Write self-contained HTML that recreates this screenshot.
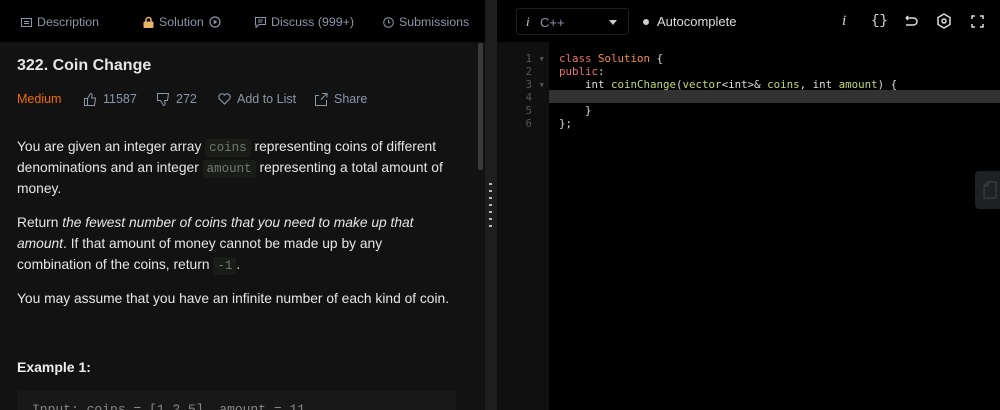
<!DOCTYPE html>
<html><head><meta charset="utf-8"><style>
*{margin:0;padding:0;box-sizing:border-box}
body{width:1000px;height:410px;overflow:hidden;background:#000;font-family:"Liberation Sans",sans-serif;position:relative}
.abs{position:absolute}
#left{left:0;top:0;width:485px;height:410px;background:#121212}
#tabs{left:0;top:0;width:485px;height:42px;background:#000;color:#8a97a6;font-size:12.4px}
.tab{position:absolute;top:15px;white-space:nowrap;display:flex;align-items:center;gap:5px}
.c{color:#e6e6e6;font-size:13.8px;line-height:21px}
code{font-family:"Liberation Mono",monospace;background:#1a1d17;color:#6d7d6f;padding:2px 4px;font-size:12.5px;line-height:1;border-radius:3px}
#div{left:485px;top:0;width:12px;height:410px;background:#1e1e1e}
.code{font-family:"DejaVu Sans Mono","Liberation Mono",monospace;font-size:10.8px;line-height:13px;white-space:pre}
</style></head><body>
<div id="left" class="abs"></div>
<div id="tabs" class="abs">
 <div class="tab" style="left:21px"><svg width="11" height="9" viewBox="0 0 11 9"><rect x=".5" y=".5" width="10" height="8" fill="none" stroke="#8a97a6"/><path d="M3 3.5h5M3 5.5h5" stroke="#8a97a6"/></svg>Description</div>
 <div class="tab" style="left:143px"><svg width="11" height="12" viewBox="0 0 11 12"><path d="M3 6V4a2.5 2.5 0 0 1 5 0v2" fill="none" stroke="#e6b56a" stroke-width="1.5"/><rect x="0.5" y="5.5" width="10" height="6.5" rx="1" fill="#e6b56a"/></svg>Solution<svg width="12" height="12" viewBox="0 0 12 12"><circle cx="6" cy="6" r="5" fill="none" stroke="#8a97a6" stroke-width="1.2"/><path d="M4.7 3.6v4.8l3.6-2.4z" fill="#8a97a6"/></svg></div>
 <div class="tab" style="left:255px"><svg width="11" height="11" viewBox="0 0 11 11"><path d="M.5.5h10v7H4l-3 3v-3H.5z" fill="none" stroke="#8a97a6"/><path d="M3 3h5M3 5h4" stroke="#8a97a6"/></svg>Discuss (999+)</div>
 <div class="tab" style="left:383px"><svg width="11" height="11" viewBox="0 0 11 11"><circle cx="5.5" cy="5.5" r="4.8" fill="none" stroke="#8a97a6"/><path d="M5.5 2.8v3h2" fill="none" stroke="#8a97a6"/></svg>Submissions</div>
</div>
<div class="abs" style="left:478px;top:43px;width:5px;height:127px;background:#3a3a3a;border-radius:2px"></div>
<div class="abs" style="left:17px;top:57px;color:#e6e6e6;font-size:16px;font-weight:bold">322. Coin Change</div>
<div class="abs" style="left:17px;top:92px;font-size:12.5px;color:#8a97a6;white-space:nowrap;width:470px">
 <span style="color:#ef6c00;position:absolute;left:0">Medium</span>
 <span style="position:absolute;left:67px;display:flex;gap:6px;align-items:center"><svg width="13" height="13" viewBox="0 0 13 13"><path d="M.5 5.5h3v7h-3zM3.5 5.5l3-5c1.5 0 1.8 1 1.5 2.5L7.5 5h4l-1 7.5h-7" fill="none" stroke="#8a97a6"/></svg>11587</span>
 <span style="position:absolute;left:140px;display:flex;gap:6px;align-items:center"><svg width="13" height="13" viewBox="0 0 13 13"><path d="M.5.5h11l-1 7h-3l.5 2.5c.3 1.5 0 2.5-1.5 2.5l-3-5h-3z" fill="none" stroke="#8a97a6"/></svg>272</span>
 <span style="position:absolute;left:201px;display:flex;gap:6px;align-items:center"><svg width="13" height="12" viewBox="0 0 13 12"><path d="M6.5 11L1.5 6A3 3 0 0 1 6.5 2a3 3 0 0 1 5 4z" fill="none" stroke="#8a97a6" stroke-width="1.2"/></svg>Add to List</span>
 <span style="position:absolute;left:298px;display:flex;gap:6px;align-items:center"><svg width="13" height="13" viewBox="0 0 13 13"><path d="M4 2.5H.5v10h11V7M7 .5h5v4M12 .5L6 6.5" fill="none" stroke="#8a97a6"/></svg>Share</span>
</div>
<div class="abs c" style="left:17px;top:136px;width:450px">You are given an integer array <code>coins</code> representing coins of different denominations and an integer <code>amount</code> representing a total amount of money.</div>
<div class="abs c" style="left:17px;top:212px;width:410px">Return <i>the fewest number of coins that you need to make up that amount</i>. If that amount of money cannot be made up by any combination of the coins, return <code>-1</code>.</div>
<div class="abs c" style="left:17px;top:288px;width:470px">You may assume that you have an infinite number of each kind of coin.</div>
<div class="abs" style="left:17px;top:359px;color:#eee;font-size:14px;font-weight:bold">Example 1:</div>
<div class="abs" style="left:17px;top:391px;width:439px;height:19px;background:#181818;overflow:hidden"><div style="font-family:'Liberation Mono',monospace;font-size:13px;color:#888;position:absolute;left:15px;top:11px">Input: coins = [1,2,5], amount = 11</div></div>
<div id="div" class="abs"></div>
<div class="abs" style="left:489px;top:183px;width:3px;height:44px;background:repeating-linear-gradient(#bbb 0 2px,transparent 2px 7px)"></div>
<div class="abs" style="left:516px;top:8px;width:113px;height:27px;border:1px solid #1e1e1e;border-radius:3px;color:#8a97a6;font-size:13px">
 <span style="position:absolute;left:9px;top:5px;font-family:'Liberation Serif',serif;font-style:italic;color:#ccc">i</span>
 <span style="position:absolute;left:23px;top:6px">C++</span>
 <span style="position:absolute;left:92px;top:11px;border:4px solid transparent;border-top:5px solid #ccc"></span>
</div>
<div class="abs" style="left:643px;top:19px;width:6px;height:6px;border-radius:50%;background:#ccc"></div>
<div class="abs" style="left:657px;top:14px;color:#ddd;font-size:13px">Autocomplete</div>
<div class="abs" style="left:842px;top:13px;color:#ddd;font-family:'Liberation Serif',serif;font-style:italic;font-size:15px">i</div>
<div class="abs" style="left:871px;top:13px;color:#ddd;font-size:14px;font-family:'Liberation Mono',monospace">{}</div>
<svg class="abs" style="left:903px;top:14px" width="15" height="14" viewBox="0 0 15 14"><path d="M3 4h7.5a3.5 3.5 0 0 1 0 7H3M3 4l2-2M3 4l2 2" fill="none" stroke="#ddd" stroke-width="1.5"/></svg>
<svg class="abs" style="left:936px;top:13px" width="16" height="16" viewBox="0 0 16 16"><path d="M8 1l6 3.5v7L8 15l-6-3.5v-7z" fill="none" stroke="#ddd" stroke-width="1.5"/><circle cx="8" cy="8" r="2" fill="none" stroke="#ddd" stroke-width="1.5"/></svg>
<svg class="abs" style="left:971px;top:15px" width="13" height="13" viewBox="0 0 13 13"><path d="M1 4V1h3M9 1h3v3M12 9v3H9M4 12H1V9" fill="none" stroke="#ddd" stroke-width="1.5"/></svg>
<div class="abs" style="left:497px;top:42px;width:52px;height:368px;background:#101010"></div>
<div class="abs" style="left:549px;top:90px;width:451px;height:13px;background:#323232"></div>
<div class="abs code" style="left:515px;top:52px;color:#555;text-align:right;width:30px">1 ▾
2  
3 ▾
4  
5  
6  </div>
<div class="abs code" style="left:559px;top:52px;color:#ddd"><span style="color:#f06b73">class</span> <span style="color:#f08d49">Solution</span> {
<span style="color:#f06b73">public</span>:
    int <span style="color:#c3d86c">coinChange</span>(<span style="color:#c3d86c">vector</span>&lt;int&gt;&amp; <span style="color:#c3d86c">coins</span>, int <span style="color:#c3d86c">amount</span>) {

    }
};</div>
<div class="abs" style="left:975px;top:171px;width:30px;height:38px;background:#1e2124;border-radius:4px"></div>
<svg class="abs" style="left:983px;top:181px" width="14" height="18" viewBox="0 0 14 18"><path d="M5 1h8v16H1V5z M5 1v4H1" fill="none" stroke="#3a3d40" stroke-width="1.3"/></svg>
</body></html>
